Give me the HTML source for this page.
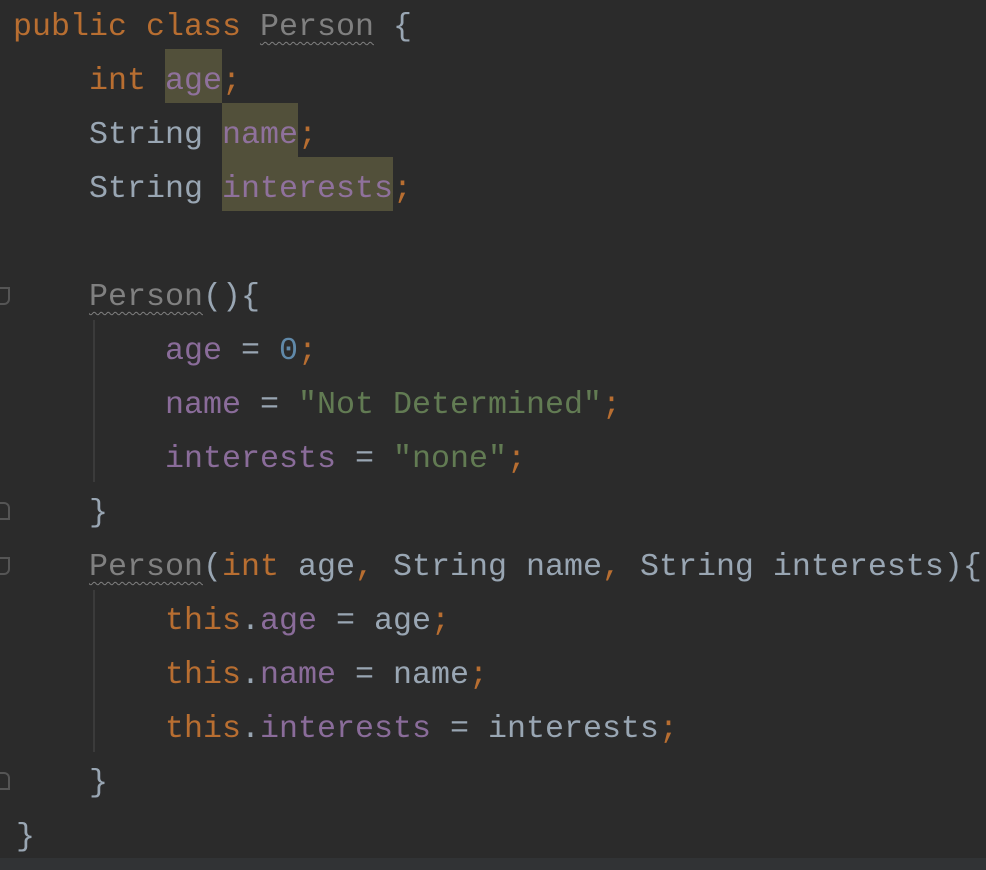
<!DOCTYPE html>
<html><head><meta charset="utf-8"><style>
html,body{margin:0;padding:0;}
body{width:986px;height:870px;background:#2b2b2b;position:relative;overflow:hidden;font-family:"Liberation Mono",monospace;font-size:31.67px;color:#a9b7c6;}
.l{position:absolute;left:13px;height:54px;line-height:54px;white-space:pre;opacity:0.88;}
.k{color:#cc7832}.f{color:#9876aa}.s{color:#6a8759}.n{color:#6897bb}
.p{color:#8c8c8c;text-decoration:underline wavy #8c8c8c;text-decoration-thickness:1px;text-underline-offset:6px;}
.hl{position:absolute;background:#52503a;}
.g{position:absolute;left:93px;width:2px;background:#3b3b3b;}
.fold{position:absolute;left:0;width:8px;height:14px;border:2px solid #555;border-left:none;}
.bot{position:absolute;left:0;top:858px;width:986px;height:12px;background:#313335;}
</style></head><body>
<div class="hl" style="left:165px;top:49px;width:57px;height:54px"></div>
<div class="hl" style="left:222px;top:103px;width:76px;height:54px"></div>
<div class="hl" style="left:222px;top:157px;width:171px;height:54px"></div>
<div class="g" style="top:320px;height:162px"></div>
<div class="g" style="top:590px;height:162px"></div>
<div class="fold" style="top:287px;border-radius:0 0 6px 0"></div>
<div class="fold" style="top:502px;border-radius:0 6px 0 0"></div>
<div class="fold" style="top:557px;border-radius:0 0 6px 0"></div>
<div class="fold" style="top:772px;border-radius:0 6px 0 0"></div>
<div class="l" style="top:0"><span class="k">public class </span><span class="p">Person</span> {</div>
<div class="l" style="top:54px">    <span class="k">int </span><span class="f">age</span><span class="k">;</span></div>
<div class="l" style="top:108px">    String <span class="f">name</span><span class="k">;</span></div>
<div class="l" style="top:162px">    String <span class="f">interests</span><span class="k">;</span></div>
<div class="l" style="top:270px">    <span class="p">Person</span>(){</div>
<div class="l" style="top:324px">        <span class="f">age</span> = <span class="n">0</span><span class="k">;</span></div>
<div class="l" style="top:378px">        <span class="f">name</span> = <span class="s">"Not Determined"</span><span class="k">;</span></div>
<div class="l" style="top:432px">        <span class="f">interests</span> = <span class="s">"none"</span><span class="k">;</span></div>
<div class="l" style="top:486px">    }</div>
<div class="l" style="top:540px">    <span class="p">Person</span>(<span class="k">int </span>age<span class="k">, </span>String name<span class="k">, </span>String interests){</div>
<div class="l" style="top:594px">        <span class="k">this</span>.<span class="f">age</span> = age<span class="k">;</span></div>
<div class="l" style="top:648px">        <span class="k">this</span>.<span class="f">name</span> = name<span class="k">;</span></div>
<div class="l" style="top:702px">        <span class="k">this</span>.<span class="f">interests</span> = interests<span class="k">;</span></div>
<div class="l" style="top:756px">    }</div>
<div class="l" style="top:810px;left:16px">}</div>
<div class="bot"></div>
</body></html>
